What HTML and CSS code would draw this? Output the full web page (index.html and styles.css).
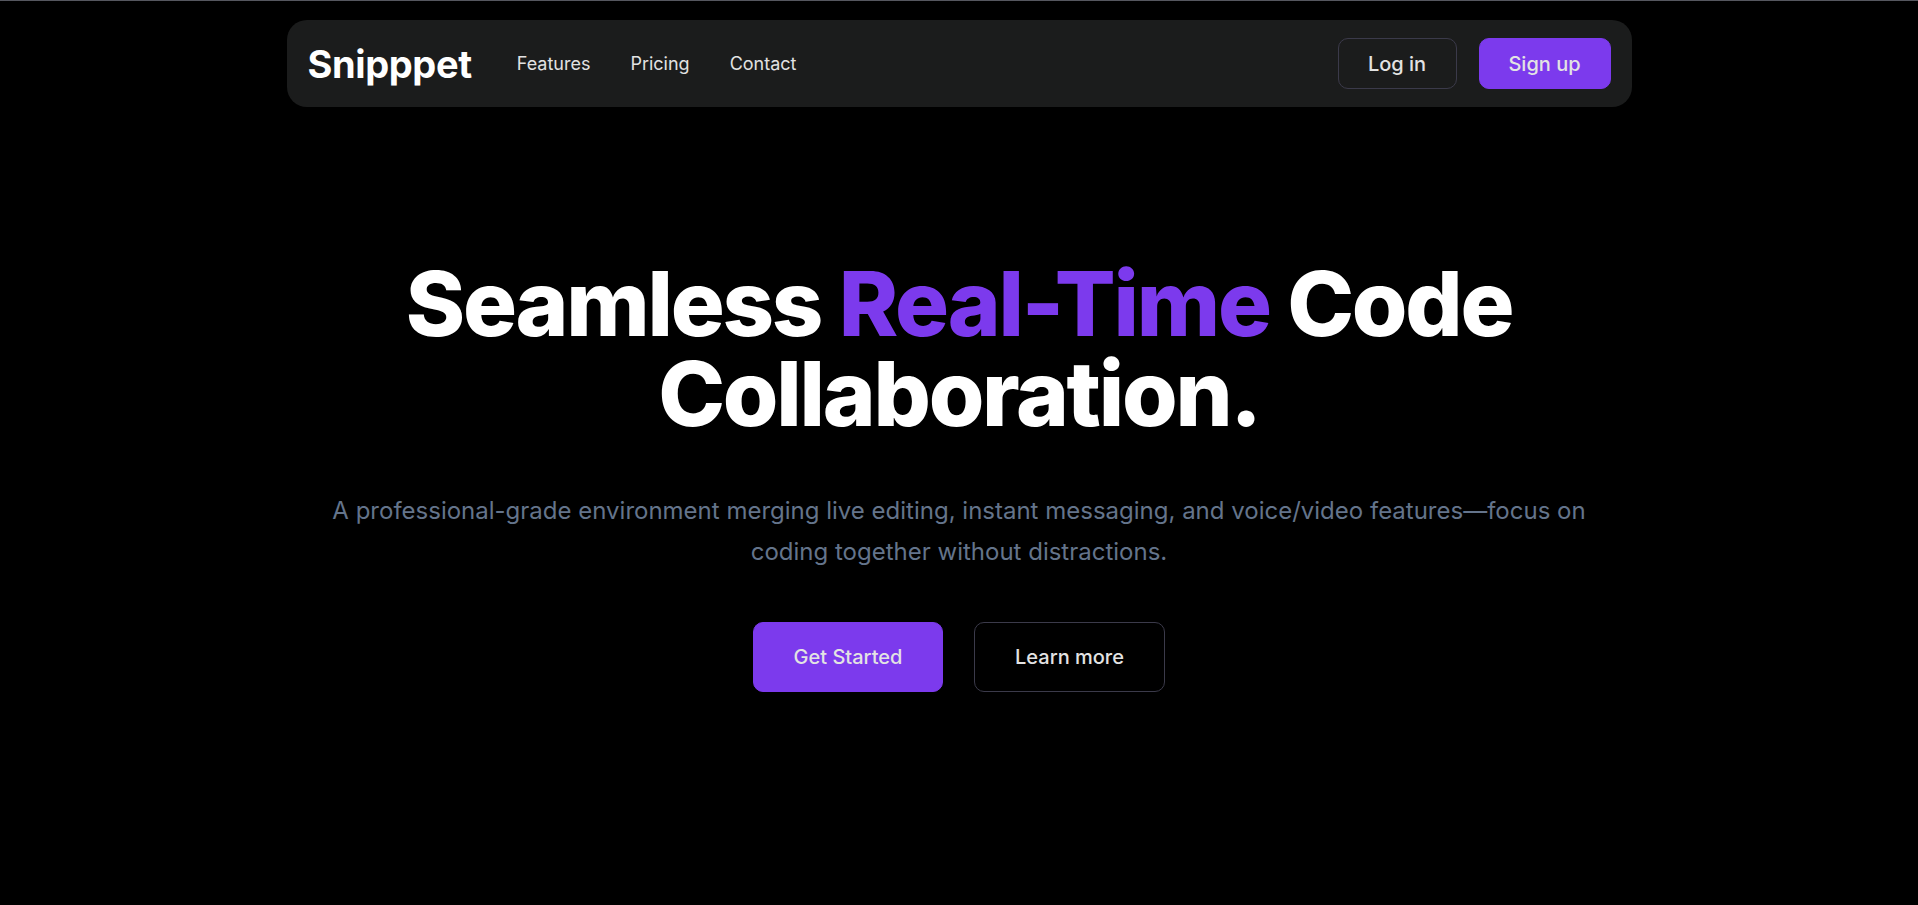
FILE: index.html
```html
<!DOCTYPE html>
<html lang="en">
<head>
<meta charset="utf-8">
<title>Snipppet</title>
<link rel="stylesheet" href="styles.css">
</head>
<body>
<div class="page">
  <header class="nav">
    <div class="nav-left">
      <a class="logo" href="#">Snipppet</a>
      <nav class="links">
        <a href="#">Features</a>
        <a href="#">Pricing</a>
        <a href="#">Contact</a>
      </nav>
    </div>
    <div class="nav-right">
      <a class="btn btn-outline nav-btn" href="#">Log in</a>
      <a class="btn btn-primary nav-btn" href="#">Sign up</a>
    </div>
  </header>

  <main class="hero">
    <h1 class="title"><span class="line">Seamless <span class="accent">Real-Time</span> Code</span><span class="line">Collaboration.</span></h1>
    <p class="subtitle">A professional-grade environment merging live editing, instant messaging, and voice/video features—focus on coding together without distractions.</p>
    <div class="actions">
      <a class="btn btn-primary hero-btn" href="#">Get Started</a>
      <a class="btn btn-outline hero-btn" href="#">Learn more</a>
    </div>
  </main>
</div>
</body>
</html>
```
FILE: styles.css
```css
* { box-sizing: border-box; }
html, body { margin: 0; padding: 0; }
body {
  background: #000;
  font-family: Inter, "Noto Sans", "Liberation Sans", sans-serif;
  color: #fff;
  min-height: 905px;
  border-top: 1px solid #55575f;
}
a { text-decoration: none; color: inherit; }
.page {
  display: flex;
  flex-direction: column;
  align-items: center;
  padding-top: 19px;
}
.nav {
  width: 1345px;
  height: 87px;
  background: #1b1c1c;
  border-radius: 20px;
  display: flex;
  align-items: center;
  justify-content: space-between;
  padding: 0 21px 0 21px;
}
.nav-left { display: flex; align-items: center; }
.logo {
  font-size: 38px;
  font-weight: 700;
  letter-spacing: -0.01em;
  color: #fff;
  margin-right: 45px;
}
.links { display: flex; gap: 40px; }
.links a {
  font-size: 18px;
  font-weight: 400;
  color: #e2e2e2;
}
.nav-right { display: flex; align-items: center; gap: 22px; }
.btn {
  display: inline-flex;
  align-items: center;
  justify-content: center;
  border-radius: 10px;
  font-weight: 500;
  color: #e3e3e3;
}
.btn-primary { background: #7c3aed; border: 1px solid #7c3aed; }
.btn-outline { background: transparent; border: 1px solid #3b3a4a; }
.nav-btn { height: 51px; font-size: 20px; }
.nav-btn.btn-outline { width: 119px; }
.nav-btn.btn-primary { width: 132px; }
.hero {
  display: flex;
  flex-direction: column;
  align-items: center;
  text-align: center;
  margin-top: 152px;
}
.title {
  margin: 0;
  display: flex;
  flex-direction: column;
  align-items: center;
  font-size: 90px;
  font-weight: 800;
  letter-spacing: -0.025em;
  color: #fff;
}
.title .line { display: block; height: 90px; line-height: 90px; }
.accent { color: #7c3aed; }
.subtitle {
  margin: 51px 0 0;
  max-width: 1290px;
  font-size: 24px;
  line-height: 41px;
  color: #64748b;
}
.actions {
  display: flex;
  gap: 31px;
  margin-top: 50px;
}
.hero-btn { width: 190px; height: 70px; font-size: 20px; }
.hero-btn.btn-outline { width: 191px; }
```
